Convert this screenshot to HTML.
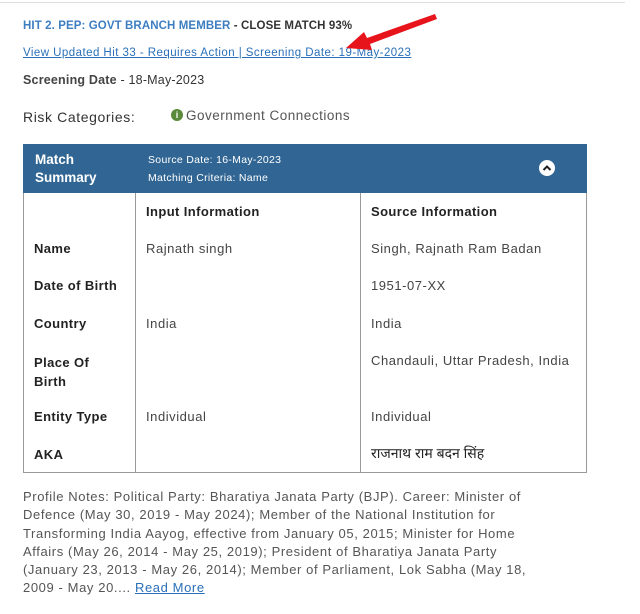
<!DOCTYPE html>
<html><head><style>
body{margin:0;width:640px;height:614px;background:#fff;font-family:"Liberation Sans",sans-serif;color:#333;position:relative;overflow:hidden}
.a{position:absolute;white-space:nowrap}
.hr{position:absolute;left:0;top:2px;width:625px;height:1px;background:#ddd}
.box{position:absolute;left:23px;top:144px;width:562px;height:328px;border:1px solid #999;border-top:none}
.hd{position:absolute;left:23px;top:144px;width:564px;height:49px;background:#316694;color:#fff}
.l{position:absolute;top:193px;width:1px;height:280px;background:#999}
.t{font-size:13px;color:#444;letter-spacing:0.55px}
.b{font-size:13px;font-weight:bold;color:#222;letter-spacing:0.4px}
</style></head><body>
<div class="hr"></div>
<div class="a" style="left:23px;top:20px;font-size:11.5px;font-weight:bold;letter-spacing:0.1px"><span style="color:#3d7ec1">HIT 2. PEP: GOVT BRANCH MEMBER</span><span style="color:#333"> - CLOSE MATCH 93%</span></div>
<div class="a" style="left:23px;top:47px;font-size:11.5px;color:#2a70b8;text-decoration:underline;letter-spacing:0.45px">View Updated Hit 33 - Requires Action | Screening Date: 19-May-2023</div>
<svg class="a" style="left:340px;top:12px" width="100" height="40"><polygon points="95,2 97,7 30,32 32,38 6,36 24,20 27,26" fill="#e8141b"/></svg>
<div class="a" style="left:23px;top:73px;font-size:12.5px;color:#333;letter-spacing:0.2px"><b style="font-weight:bold;color:#444">Screening Date</b> - 18-May-2023</div>
<div class="a" style="left:23px;top:109px;font-size:14px;color:#333;letter-spacing:0.6px">Risk Categories:</div>
<div class="a" style="left:171px;top:109px;width:12px;height:12px;border-radius:50%;background:#5a8a3a;color:#fff;font-size:9px;font-weight:bold;text-align:center;line-height:12px">i</div>
<div class="a" style="left:186px;top:108px;font-size:13.5px;color:#555;letter-spacing:0.5px">Government Connections</div>
<div class="box"></div>
<div class="hd">
<div class="a" style="left:12px;top:7px;font-size:13.5px;font-weight:bold;line-height:18px">Match<br>Summary</div>
<div class="a" style="left:125px;top:7px;font-size:10.5px;line-height:18px;letter-spacing:0.3px">Source Date: 16-May-2023<br>Matching Criteria: Name</div>
<div class="a" style="left:516px;top:16px;width:16px;height:16px;border-radius:50%;background:#fff"><svg width="16" height="16"><path d="M4.5 10 L8 6.5 L11.5 10" stroke="#222" stroke-width="2" fill="none"/></svg></div>
</div>
<div class="l" style="left:135px"></div><div class="l" style="left:360px"></div>
<div class="a b" style="left:146px;top:204px">Input Information</div>
<div class="a b" style="left:371px;top:204px">Source Information</div>
<div class="a b" style="left:34px;top:241px">Name</div><div class="a t" style="left:146px;top:241px">Rajnath singh</div><div class="a t" style="left:371px;top:241px">Singh, Rajnath Ram Badan</div>
<div class="a b" style="left:34px;top:278px">Date of Birth</div><div class="a t" style="left:371px;top:278px">1951-07-XX</div>
<div class="a b" style="left:34px;top:316px">Country</div><div class="a t" style="left:146px;top:316px">India</div><div class="a t" style="left:371px;top:316px">India</div>
<div class="a b" style="left:34px;top:353px;line-height:19px">Place Of<br>Birth</div><div class="a t" style="left:371px;top:353px">Chandauli, Uttar Pradesh, India</div>
<div class="a b" style="left:34px;top:409px">Entity Type</div><div class="a t" style="left:146px;top:409px">Individual</div><div class="a t" style="left:371px;top:409px">Individual</div>
<div class="a b" style="left:34px;top:447px">AKA</div><div class="a" style="left:371px;top:444px;font-size:14px;color:#222;font-family:'Liberation Sans','Noto Sans CJK SC',sans-serif">राजनाथ राम बदन सिंह</div>
<div class="a" style="left:23px;top:488px;font-size:13px;line-height:18.3px;color:#555;letter-spacing:0.6px">Profile Notes: Political Party: Bharatiya Janata Party (BJP). Career: Minister of<br>Defence (May 30, 2019 - May 2024); Member of the National Institution for<br>Transforming India Aayog, effective from January 05, 2015; Minister for Home<br>Affairs (May 26, 2014 - May 25, 2019); President of Bharatiya Janata Party<br>(January 23, 2013 - May 26, 2014); Member of Parliament, Lok Sabha (May 18,<br>2009 - May 20.... <span style="color:#2a70b8;text-decoration:underline">Read More</span></div>
</body></html>
